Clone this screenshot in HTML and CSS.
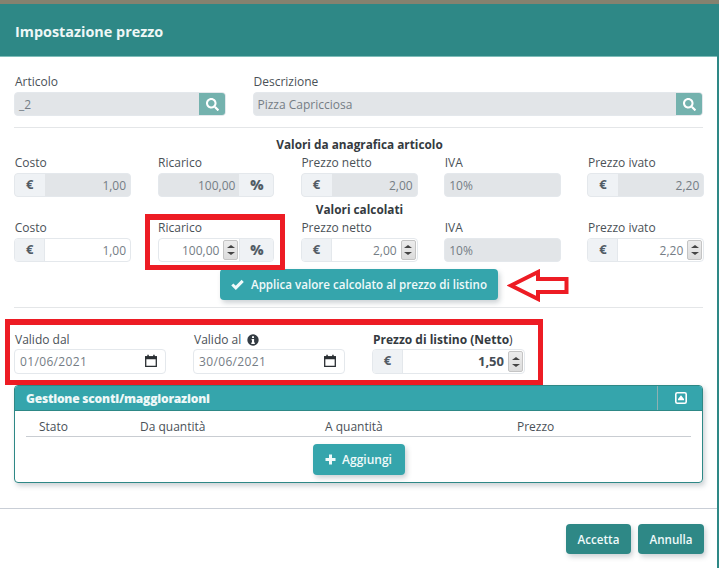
FILE: index.html
```html
<!DOCTYPE html>
<html lang="it">
<head>
<meta charset="utf-8">
<title>Impostazione prezzo</title>
<link rel="stylesheet" href="styles.css">
</head>
<body>
<svg class="defs" width="0" height="0" aria-hidden="true">
  <symbol id="i-search" viewBox="0 0 512 512"><path fill="currentColor" d="M505 442.700L405.300 343c-4.500-4.500-10.600-7-17-7H372c27.600-35.300 44-79.700 44-128C416 93.100 322.900 0 208 0S0 93.100 0 208s93.100 208 208 208c48.300 0 92.700-16.400 128-44v16.300c0 6.400 2.500 12.500 7 17l99.700 99.700c9.400 9.400 24.600 9.400 33.900 0l28.300-28.300c9.400-9.400 9.400-24.600.1-34zM208 336c-70.700 0-128-57.200-128-128 0-70.700 57.200-128 128-128 70.700 0 128 57.200 128 128 0 70.700-57.200 128-128 128z"/></symbol>
  <symbol id="i-cal" viewBox="0 0 14 14"><path fill="none" stroke="currentColor" stroke-width="1.300" d="M1.700 3h10.600v9.400H1.700z"/><path fill="currentColor" d="M1 2.200h12v3H1zM3.300.8h1.500v2H3.300zM9.200.8h1.500v2H9.200z"/></symbol>
</svg>
<div class="topstrip"></div>
<main class="modal">
  <header class="modal-head"><h1>Impostazione prezzo</h1></header>
  <div class="modal-body">
    <div class="row-art">
      <div class="field art">
        <label>Articolo</label>
        <div class="group disabled"><div class="val left">_2</div><span class="searchbtn"><svg width="13" height="13"><use href="#i-search"/></svg></span></div>
      </div>
      <div class="field desc">
        <label>Descrizione</label>
        <div class="group disabled"><div class="val left">Pizza Capricciosa</div><span class="searchbtn"><svg width="13" height="13"><use href="#i-search"/></svg></span></div>
      </div>
    </div>
    <hr class="rule rule1">
    <h2 class="sect s1">Valori da anagrafica articolo</h2>
    <div class="grid5">
      <div class="field"><label>Costo</label><div class="group disabled"><span class="addon">€</span><div class="val">1,00</div></div></div>
      <div class="field"><label>Ricarico</label><div class="group disabled"><div class="val">100,00</div><span class="addon bold">%</span></div></div>
      <div class="field"><label>Prezzo netto</label><div class="group disabled"><span class="addon">€</span><div class="val">2,00</div></div></div>
      <div class="field"><label>IVA</label><div class="group disabled"><div class="val left">10%</div></div></div>
      <div class="field"><label>Prezzo ivato</label><div class="group disabled"><span class="addon">€</span><div class="val">2,20</div></div></div>
    </div>
    <h2 class="sect s2">Valori calcolati</h2>
    <div class="grid5">
      <div class="field"><label>Costo</label><div class="group"><span class="addon">€</span><div class="val">1,00</div></div></div>
      <div class="field"><label>Ricarico</label><div class="group"><div class="val">100,00</div><span class="spin"><i></i><b></b></span><span class="addon bold">%</span></div></div>
      <div class="field"><label>Prezzo netto</label><div class="group"><span class="addon">€</span><div class="val">2,00</div><span class="spin"><i></i><b></b></span></div></div>
      <div class="field"><label>IVA</label><div class="group disabled"><div class="val left">10%</div></div></div>
      <div class="field"><label>Prezzo ivato</label><div class="group"><span class="addon">€</span><div class="val">2,20</div><span class="spin"><i></i><b></b></span></div></div>
    </div>
    <div class="apply-row">
      <button class="btn apply"><svg width="13" height="11" viewBox="0 0 13 11"><path fill="none" stroke="currentColor" stroke-width="3" d="M1.300 5.500l3.500 3.400 6.900-7"/></svg>Applica valore calcolato al prezzo di listino</button>
    </div>
    <hr class="rule rule2">
    <div class="row-valid">
      <div class="field date"><label>Valido dal</label><div class="group"><div class="val left dateval">01/06/2021</div><svg class="calicon" width="14" height="14"><use href="#i-cal"/></svg></div></div>
      <div class="field date"><label>Valido al <svg class="info" width="12" height="12" viewBox="0 0 12 12"><circle cx="6" cy="6" r="5.700" fill="#333b42"/><path fill="#fff" d="M5 2.300h2v1.700H5zM4.600 5h2.500v3.600h.7V10H4.300V8.600H5V6.300h-.4z"/></svg></label><div class="group"><div class="val left dateval">30/06/2021</div><svg class="calicon" width="14" height="14"><use href="#i-cal"/></svg></div></div>
      <div class="field listino"><label class="strong"><b>Prezzo di listino (Netto</b>)</label><div class="group"><span class="addon">€</span><div class="val darkval">1,50</div><span class="spin"><i></i><b></b></span></div></div>
    </div>
    <section class="panel">
      <div class="panel-head">
        <h3>Gestione sconti/maggiorazioni</h3>
        <span class="collapse"><svg width="12" height="12" viewBox="0 0 12 12"><rect x=".8" y=".8" width="10.400" height="10.400" rx="1.500" fill="none" stroke="#fff" stroke-width="1.600"/><path fill="#fff" d="M6 3.200l3 3.800v1.300H3V7z"/></svg></span>
      </div>
      <div class="panel-body">
        <div class="thead"><span>Stato</span><span>Da quantità</span><span>A quantità</span><span>Prezzo</span></div>
        <div class="add-row"><button class="btn add"><svg width="11" height="11" viewBox="0 0 11 11"><path fill="currentColor" d="M4 .5h3V4h3.500v3H7v3.500H4V7H.5V4H4z"/></svg>Aggiungi</button></div>
      </div>
    </section>
  </div>
  <footer class="modal-foot">
    <button class="btn dark accetta">Accetta</button>
    <button class="btn dark annulla">Annulla</button>
  </footer>
</main>
<div class="redbox box1"></div>
<div class="redbox box2"></div>
<svg class="arrow" width="62" height="33" viewBox="0 0 62 33"><path fill="none" stroke="#ed1c24" stroke-width="4" d="M4 16.500L31 3v7h28.500v13H31v7z"/></svg>
</body>
</html>
```
FILE: styles.css
```css
* { box-sizing: border-box; }
html, body { margin: 0; padding: 0; background: #fff; }
body {
  width: 728px; height: 570px; overflow: hidden; position: relative;
  font-family: "Open Sans", "Noto Sans", sans-serif; font-size: 12px; color: #343a40;
}
.defs { position: absolute; }
.topstrip { height: 4px; width: 719px; background: #85826f; }
.modal { width: 719px; height: 564px; border-right: 2px solid #2e8886; background: #fff; }
.modal-head { height: 53px; background: #2e8886; display: flex; align-items: center; padding: 2px 0 0 15px; border-bottom: 1px solid #7fbdb9; }
.modal-head h1 { margin: 0; font-size: 14.400px; font-weight: 700; color: #eef7f6; }
.modal-body { padding: 0 14px; height: 451px; }
label { display: block; height: 19px; line-height: 17px; padding-left: 1px; color: #4a5157; font-size: 12px; white-space: nowrap; }
.row-art { display: flex; gap: 27px; padding-top: 16px; }
.art { width: 212px; }
.desc { width: 450px; }
.row-art .desc label, .row-art .desc .group { margin-left: -.5px; }
.group { display: flex; height: 24px; border: 1px solid #e4e8ec; border-radius: 4px; background: #fff; overflow: hidden; }
.group.disabled { background: #e2e5e8; border-color: #e4e8ec; }
.val { flex: 1; min-width: 0; text-align: right; line-height: 23px; padding: 0 4px; color: #757d85; font-size: 12px; }
.val.left { text-align: left; }
.addon { width: 30px; flex: none; background: #eff2f5; color: #525c65; font-weight: 700; font-size: 13px; text-align: center; line-height: 20px; border-right: 1px solid #e4e8ec; }
.addon.bold { width: 34px; border-right: 0; border-left: 1px solid #e4e8ec; font-weight: 800; font-size: 14px; line-height: 22px; background: #eff2f5; }
.group.disabled .addon { border-color: transparent; }
.searchbtn { width: 26px; flex: none; background: #74b2ae; color: #fff; display: flex; align-items: center; justify-content: center; }
.spin { width: 15px; flex: none; margin: 1px 1px 1px 0; background: linear-gradient(#ececec, #dcdcdc); border: 1px solid #c4c4c4; border-radius: 2px; display: flex; flex-direction: column; align-items: center; justify-content: center; gap: 4px; }
.spin i { width: 0; height: 0; border: 4px solid transparent; border-top: 0; border-bottom: 3px solid #444; }
.spin b { width: 0; height: 0; border: 4px solid transparent; border-bottom: 0; border-top: 3px solid #444; }
.rule { border: 0; border-top: 1px solid #e4e6e8; margin: 0; height: 0; }
.rule1 { margin-top: 11px; }
.sect { margin: 0; padding-left: 2px; text-align: center; font-size: 11.800px; font-weight: 700; color: #343a40; line-height: 16px; }
.s1 { margin-top: 8px; }
.s2 { margin-top: 4px; }
.grid5 { display: grid; grid-template-columns: repeat(5, 116.800px); column-gap: 26.500px; margin-left: .3px; }
.grid5 label { height: 18px; line-height: 20px; margin: 1px 0 2px; padding-left: .5px; }
.apply-row { display: flex; padding: 7px 0 0 206px; }
.btn { border: 0; font-family: inherit; font-size: 11.600px; font-weight: 600; color: #f0fafa; background: #35a5ac; border-radius: 4px; display: flex; align-items: center; justify-content: center; box-shadow: 2px 3px 5px rgba(60, 80, 90, .25); padding: 0; }
.apply { width: 278px; height: 31px; gap: 7px; }
.rule2 { margin-top: 7px; }
.row-valid { display: flex; gap: 27px; padding-top: 23px; }
.date { width: 152px; }
.listino { width: 153px; }
.row-valid label { height: 18px; line-height: 17px; }
.row-valid .group { height: 25px; }
.strong { color: #343a40; }
.strong b { font-weight: 700; }
.info { vertical-align: -2px; margin-left: 3px; }
.dateval { padding-left: 5px; letter-spacing: .35px; }
.calicon { color: #2a2f33; margin: 4px 7px 0 0; flex: none; }
.darkval { color: #454d55; font-weight: 700; font-size: 13px; }
.panel { margin-top: 11px; height: 98px; border: 1px solid #2e8886; border-radius: 4px; box-shadow: 2px 3px 5px rgba(60, 80, 90, .25); }
.panel-head { height: 25px; background: #35a5ac; border-radius: 3px 3px 0 0; display: flex; align-items: center; border-bottom: 1px solid #2e8886; }
.panel-head h3 { margin: 0 0 0 11px; flex: 1; font-size: 12px; font-weight: 800; letter-spacing: -.2px; color: #eef8f8; }
.collapse { width: 45px; height: 24px; border-left: 1px solid #8fb0b2; display: flex; align-items: center; justify-content: center; padding-left: 2px; }
.panel-body { padding: 0 11px; }
.thead { height: 26px; border-bottom: 1px solid #c9cdd2; display: grid; grid-template-columns: 101px 185px 192px 1fr; padding: 7px 0 0 13px; color: #4a5158; line-height: 17px; }
.add-row { display: flex; justify-content: center; padding-top: 7px; }
.add { width: 92px; height: 31px; gap: 6px; font-size: 12px; }
.modal-foot { border-top: 1px solid #c9ced6; height: 60px; display: flex; justify-content: flex-end; gap: 7px; padding: 15px 13px 0 0; }
.dark { background: #2e8886; height: 30px; }
.accetta { width: 65px; }
.annulla { width: 66px; }
.redbox { position: absolute; border: 5px solid #ed1c24; pointer-events: none; }
.box1 { left: 145px; top: 214px; width: 140px; height: 56px; border-top-width: 6px; }
.box2 { left: 5px; top: 319px; width: 538px; height: 66px; border-top-width: 6px; }
.arrow { position: absolute; left: 507px; top: 269px; }
```
